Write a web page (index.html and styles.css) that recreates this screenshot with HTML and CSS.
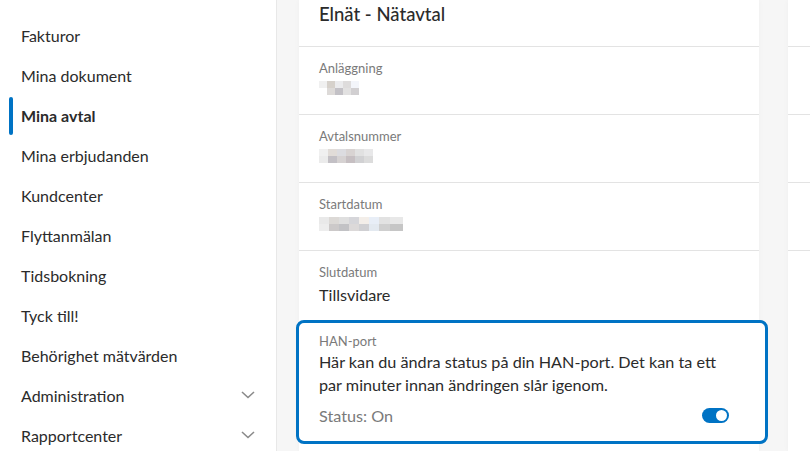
FILE: index.html
```html
<!DOCTYPE html>
<html lang="sv">
<head>
    <meta charset="UTF-8">
    <meta name="viewport" content="width=device-width, initial-scale=1.0">
    <title>Mina avtal</title>
    <link rel="stylesheet" href="styles.css">
</head>
<body>
    <nav class="sidebar">
        <a class="nav-item" href="#">Fakturor</a>
        <a class="nav-item" href="#">Mina dokument</a>
        <a class="nav-item active" href="#">Mina avtal</a>
        <a class="nav-item" href="#">Mina erbjudanden</a>
        <a class="nav-item" href="#">Kundcenter</a>
        <a class="nav-item" href="#">Flyttanmälan</a>
        <a class="nav-item" href="#">Tidsbokning</a>
        <a class="nav-item" href="#">Tyck till!</a>
        <a class="nav-item" href="#">Behörighet mätvärden</a>
        <a class="nav-item" href="#">Administration
            <svg class="chevron" width="14" height="8" viewBox="0 0 14 8"><path d="M1 1l6 5.5L13 1" fill="none" stroke="#8a8a8a" stroke-width="1.6"/></svg>
        </a>
        <a class="nav-item" href="#">Rapportcenter
            <svg class="chevron" width="14" height="8" viewBox="0 0 14 8"><path d="M1 1l6 5.5L13 1" fill="none" stroke="#8a8a8a" stroke-width="1.6"/></svg>
        </a>
    </nav>

    <main class="content">
        <section class="card">
            <div class="card-title">Elnät - Nätavtal</div>
            <div class="row">
                <div class="label">Anläggning</div>
                <div class="value"><span class="mosaic m-short"></span></div>
            </div>
            <div class="row">
                <div class="label">Avtalsnummer</div>
                <div class="value"><span class="mosaic m-mid"></span></div>
            </div>
            <div class="row">
                <div class="label">Startdatum</div>
                <div class="value"><span class="mosaic m-long"></span></div>
            </div>
            <div class="row last">
                <div class="label">Slutdatum</div>
                <div class="value text">Tillsvidare</div>
            </div>
            <div class="han-box">
                <div class="label">HAN-port</div>
                <p class="han-text">Här kan du ändra status på din HAN-port. Det kan ta ett par minuter innan ändringen slår igenom.</p>
                <div class="han-status">
                    <span>Status: On</span>
                    <span class="toggle"><span class="knob"></span></span>
                </div>
            </div>
        </section>

        <section class="card side">
            <div class="card-title"></div>
            <div class="row"></div>
            <div class="row"></div>
            <div class="row"></div>
        </section>
    </main>
</body>
</html>
```

FILE: styles.css
```css
:root {
    --blue: #0073c4;
    --text: #2b2b2b;
    --muted: #7a7a7a;
    --line: #e3e3e3;
}

* {
    box-sizing: border-box;
}

body {
    margin: 0;
    display: flex;
    height: 451px;
    overflow: hidden;
    font-family: 'Lato', 'Open Sans', sans-serif;
    color: var(--text);
    background: #f6f6f6;
}

/* sidebar */
.sidebar {
    width: 277px;
    flex-shrink: 0;
    background: #fff;
    border-right: 1px solid #e8e8e8;
    padding: 15px 20px 0 0;
    display: flex;
    flex-direction: column;
}

.nav-item {
    position: relative;
    display: flex;
    align-items: center;
    justify-content: space-between;
    height: 40px;
    padding-left: 21px;
    font-size: 16px;
    color: var(--text);
    text-decoration: none;
    flex-shrink: 0;
}

.nav-item.active {
    font-weight: 700;
}

.nav-item.active::before {
    content: '';
    position: absolute;
    left: 9px;
    top: 2px;
    bottom: 0;
    width: 4px;
    border-radius: 2px;
    background: var(--blue);
}

.chevron {
    margin-right: 1px;
}

/* main */
.content {
    flex: 1;
    display: flex;
    gap: 29px;
    padding-left: 22px;
}

.card {
    width: 460px;
    flex-shrink: 0;
    background: #fff;
    box-shadow: 0 0 6px rgba(0, 0, 0, 0.03);
}

.card.side {
    width: 60px;
}

.card-title {
    height: 47px;
    padding: 3px 20px 0;
    font-size: 18.5px;
    font-weight: 500;
    border-bottom: 1px solid var(--line);
}

.row {
    height: 68px;
    padding: 13px 20px 0;
    border-bottom: 1px solid var(--line);
}

.row.last {
    height: 69px;
    border-bottom: none;
}

.label {
    font-size: 13px;
    line-height: 17px;
    color: var(--muted);
}

.value {
    height: 22px;
    padding-top: 4px;
}

.value.text {
    padding-top: 3px;
    font-size: 16.2px;
    line-height: 22px;
}

.mosaic {
    display: block;
    height: 14px;
    opacity: 0.85;
    background-repeat: no-repeat;
    background-size: 100% 50%;
    background-position: top, bottom;
}

.m-short {
    width: 40px;
    background-image:
        linear-gradient(90deg, #eee 0 20%, #cfc9c3 20% 40%, #e8e8ea 40% 60%, #d9d6d6 60% 80%, #f1f4fa 80%),
        linear-gradient(90deg, #fff 0 20%, #d8d4d2 20% 40%, #b9b7bd 40% 60%, #dedcdc 60% 80%, #c9c7c9 80%);
}

.m-mid {
    width: 54px;
    background-image:
        linear-gradient(90deg, #eee 0 16%, #dcd7d2 16% 33%, #d6d7db 33% 50%, #d2cccb 50% 66%, #dcdcdc 66% 83%, #e4e4e6 83%),
        linear-gradient(90deg, #e8e8e8 0 16%, #b9b6bc 16% 33%, #cfcbcb 33% 50%, #bdb5b8 50% 66%, #c9c9cc 66% 83%, #d6d6d6 83%);
}

.m-long {
    width: 84px;
    background-image:
        linear-gradient(90deg, #e6e6e6 0 12%, #d6d3d0 12% 24%, #dadada 24% 36%, #cfcfd4 36% 48%, #f1ece6 48% 60%, #e4ecf6 60% 72%, #ddd 72% 84%, #e4e4e4 84%),
        linear-gradient(90deg, #eaeaea 0 12%, #c4c0c0 12% 24%, #b8b8bc 24% 36%, #d6d3d3 36% 48%, #c8c8cc 48% 60%, #dfe6ee 60% 72%, #c7c7c7 72% 84%, #bdbdbd 84%);
}

/* HAN-port */
.han-box {
    margin: 0 -9px 0 -3px;
    height: 124px;
    padding: 10px 36px 0 20px;
    border: 3px solid var(--blue);
    border-radius: 8px;
    background: #fff;
}

.han-text {
    margin: 0;
    font-size: 16.2px;
    line-height: 23px;
}

.han-status {
    display: flex;
    align-items: center;
    justify-content: space-between;
    margin-top: 10px;
    font-size: 16.2px;
    color: var(--muted);
}

.toggle {
    position: relative;
    width: 27px;
    height: 15px;
    border-radius: 8px;
    background: var(--blue);
}

.knob {
    position: absolute;
    right: 2px;
    top: 2px;
    width: 11px;
    height: 11px;
    border-radius: 50%;
    background: #fff;
}
```
